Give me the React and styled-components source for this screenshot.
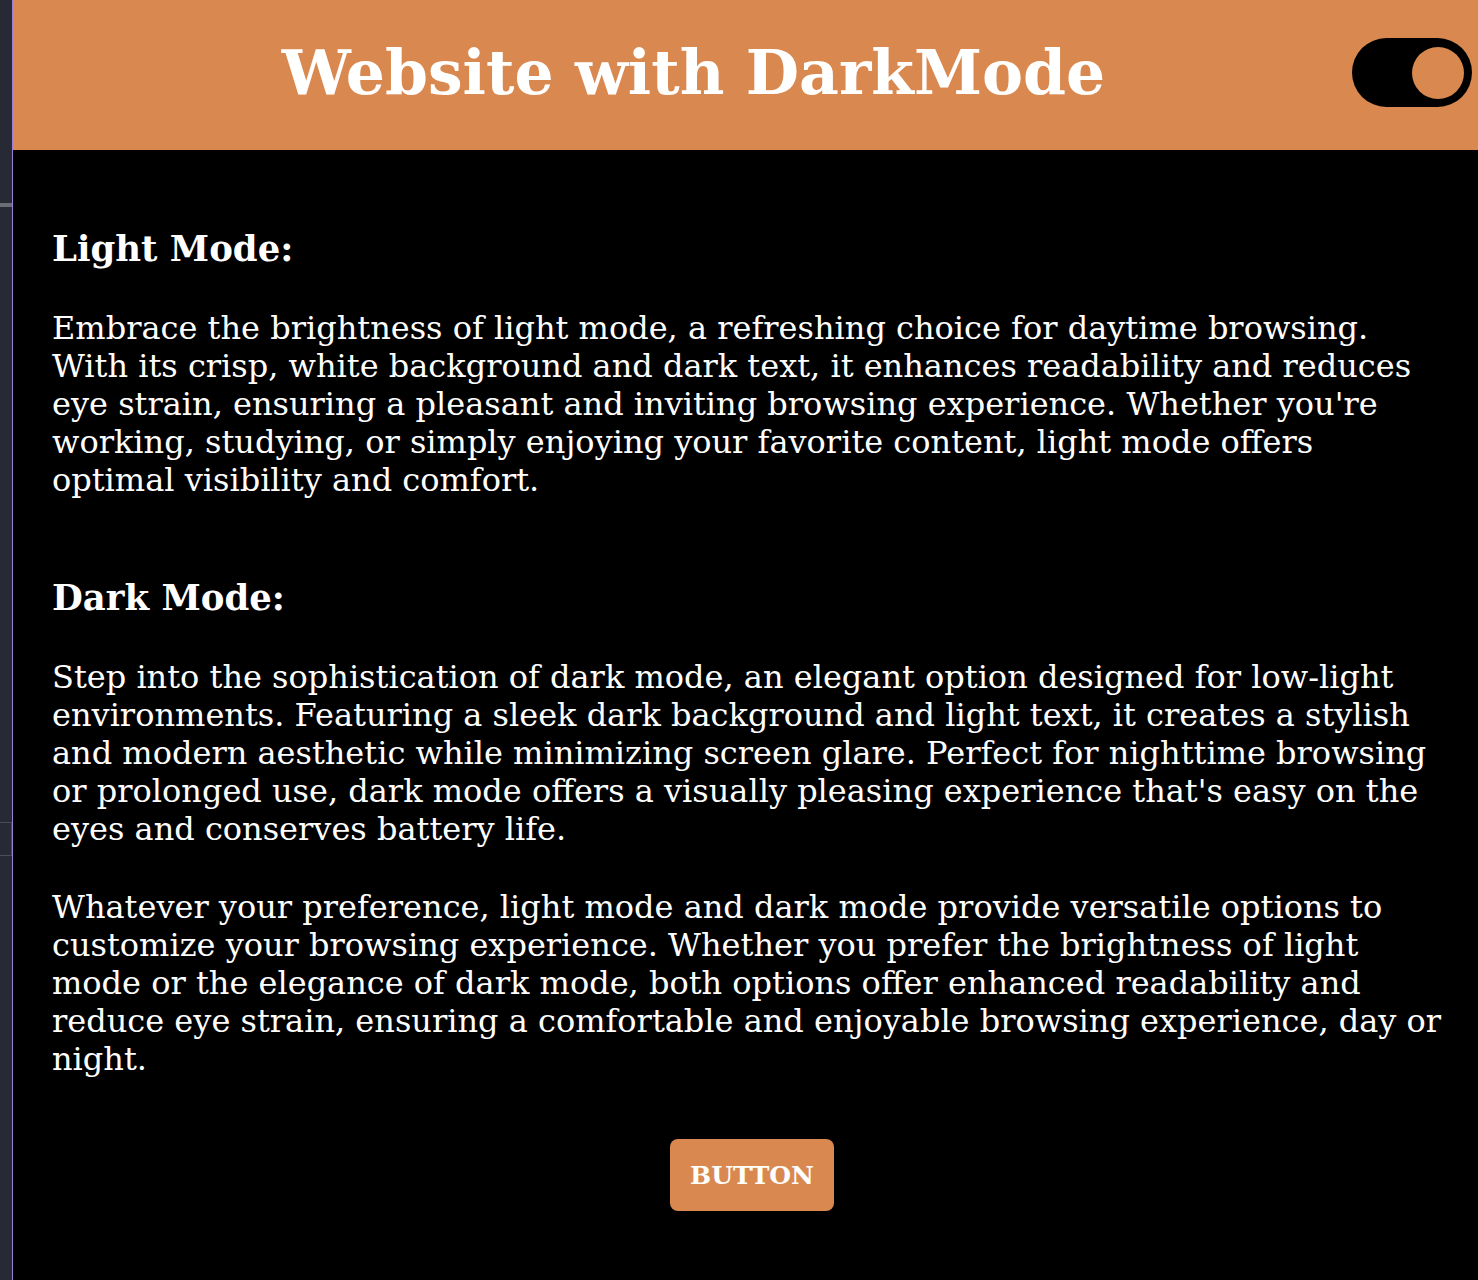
import React from 'react';
import styled, { createGlobalStyle } from 'styled-components';

const Global = createGlobalStyle`
    html, body {
        margin: 0;
        padding: 0;
        background: #000;
    }
    body {
        font-family: 'DejaVu Serif', 'Liberation Serif', serif;
    }
`;

const Shell = styled.div`
    display: flex;
    min-height: 1280px;
`;

const Gutter = styled.div`
    width: 12px;
    flex-shrink: 0;
    background: #272a35;
    border-right: 1px solid #9b7fd4;
    display: flex;
    flex-direction: column;
`;

const GutterMark = styled.div`
    height: ${(p) => p.h}px;
    margin-top: ${(p) => p.top}px;
    background: ${(p) => p.fill || 'transparent'};
    border: ${(p) => (p.box ? '1px solid #4a4d58' : 'none')};
    border-left: none;
`;

const Page = styled.div`
    flex: 1;
    background: #000;
    color: #fff;
`;

const Header = styled.header`
    height: 150px;
    background: #d9894f;
    display: flex;
    align-items: center;
    padding: 0 6px 0 22px;
    box-sizing: border-box;
`;

const Title = styled.h1`
    flex: 1;
    margin: 0 0 6px;
    text-align: center;
    font-size: 61.5px;
    font-weight: 700;
    color: #fff;
`;

const Toggle = styled.div`
    width: 120px;
    height: 69px;
    margin-bottom: 5px;
    border-radius: 35px;
    background: #000;
    display: flex;
    align-items: center;
    justify-content: flex-end;
    padding: 0 8px;
    box-sizing: border-box;
`;

const Knob = styled.span`
    width: 52px;
    height: 52px;
    border-radius: 50%;
    background: #d9894f;
`;

const Content = styled.main`
    padding: 78px 26px 70px 39px;
`;

const Section = styled.section`
    margin-bottom: ${(p) => p.gap || 0}px;
`;

const Heading = styled.h2`
    margin: 0 0 40px;
    font-size: 35.5px;
    line-height: 41px;
    font-weight: 700;
`;

const Text = styled.p`
    margin: 0 0 ${(p) => p.gap || 0}px;
    font-size: 32px;
    line-height: 38px;
    white-space: nowrap;
`;

const ButtonRow = styled.div`
    display: flex;
    justify-content: center;
    margin-top: 61px;
`;

const Button = styled.button`
    width: 164px;
    height: 72px;
    border: none;
    border-radius: 8px;
    background: #d9894f;
    color: #fff;
    font-family: inherit;
    font-size: 25px;
    font-weight: 700;
`;

const lines = (arr) =>
    arr.map((l, i) => (
        <React.Fragment key={i}>
            {l}
            {i < arr.length - 1 && <br />}
        </React.Fragment>
    ));

export default function App() {
    return (
        <>
            <Global />
            <Shell>
                <Gutter>
                    <GutterMark top={203} h={4} fill="#6b6d75" />
                    <GutterMark top={615} h={32} box />
                </Gutter>
                <Page>
                    <Header>
                        <Title>Website with DarkMode</Title>
                        <Toggle>
                            <Knob />
                        </Toggle>
                    </Header>
                    <Content>
                        <Section gap={78}>
                            <Heading>Light Mode:</Heading>
                            <Text>
                                {lines([
                                    'Embrace the brightness of light mode, a refreshing choice for daytime browsing.',
                                    'With its crisp, white background and dark text, it enhances readability and reduces',
                                    "eye strain, ensuring a pleasant and inviting browsing experience. Whether you're",
                                    'working, studying, or simply enjoying your favorite content, light mode offers',
                                    'optimal visibility and comfort.',
                                ])}
                            </Text>
                        </Section>
                        <Section>
                            <Heading>Dark Mode:</Heading>
                            <Text gap={40}>
                                {lines([
                                    'Step into the sophistication of dark mode, an elegant option designed for low-light',
                                    'environments. Featuring a sleek dark background and light text, it creates a stylish',
                                    'and modern aesthetic while minimizing screen glare. Perfect for nighttime browsing',
                                    "or prolonged use, dark mode offers a visually pleasing experience that's easy on the",
                                    'eyes and conserves battery life.',
                                ])}
                            </Text>
                            <Text>
                                {lines([
                                    'Whatever your preference, light mode and dark mode provide versatile options to',
                                    'customize your browsing experience. Whether you prefer the brightness of light',
                                    'mode or the elegance of dark mode, both options offer enhanced readability and',
                                    'reduce eye strain, ensuring a comfortable and enjoyable browsing experience, day or',
                                    'night.',
                                ])}
                            </Text>
                        </Section>
                        <ButtonRow>
                            <Button>BUTTON</Button>
                        </ButtonRow>
                    </Content>
                </Page>
            </Shell>
        </>
    );
}
